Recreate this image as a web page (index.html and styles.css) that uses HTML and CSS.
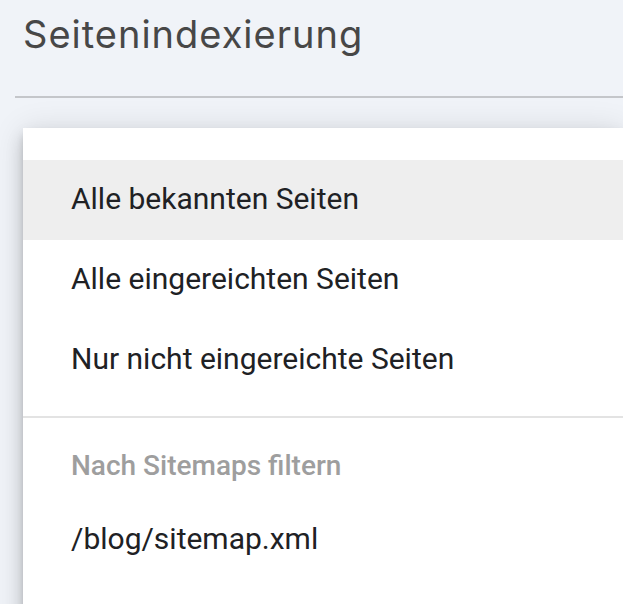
FILE: index.html
```html
<!DOCTYPE html>
<html lang="de">
<head>
<meta charset="utf-8">
<title>Seitenindexierung</title>
<link rel="stylesheet" href="styles.css">
</head>
<body>
<header class="page-head">
  <h1 class="title">Seitenindexierung</h1>
</header>
<div class="rule"></div>
<div class="menu" role="listbox">
  <div class="item selected" role="option">Alle bekannten Seiten</div>
  <div class="item" role="option">Alle eingereichten Seiten</div>
  <div class="item" role="option">Nur nicht eingereichte Seiten</div>
  <div class="menu-sep"></div>
  <div class="group-label">Nach Sitemaps filtern</div>
  <div class="item" role="option">/blog/sitemap.xml</div>
</div>
</body>
</html>
```
FILE: styles.css
```css
html, body {
  margin: 0;
  padding: 0;
  height: 100%;
  overflow: hidden;
}
body {
  background: #f0f3f8;
  font-family: Roboto, "Noto Sans", sans-serif;
}
.page-head {
  box-sizing: border-box;
  height: 96px;
  padding: 12px 0 0 23px;
}
.title {
  margin: 0;
  font-family: Inter, Roboto, sans-serif;
  font-size: 38px;
  line-height: 44px;
  font-weight: 400;
  letter-spacing: 1px;
  color: #474747;
}
.rule {
  margin-left: 15px;
  height: 2px;
  background: #c4c6ca;
}
.menu {
  margin: 30px 0 0 23px;
  padding-top: 32px;
  height: 480px;
  background: #fff;
  box-shadow: 0 5px 8px -2px rgba(0,0,0,.2), 0 10px 17px 0 rgba(0,0,0,.14), 0 2px 30px 0 rgba(0,0,0,.12);
}
.item {
  height: 80px;
  line-height: 78px;
  padding-left: 48px;
  font-size: 30px;
  color: #202124;
  white-space: nowrap;
}
.item.selected {
  background: #eeeeee;
}
.menu-sep {
  margin-top: 16px;
  height: 2px;
  background: #e3e3e3;
}
.group-label {
  box-sizing: border-box;
  height: 82px;
  padding: 32px 0 0 48px;
  font-size: 28px;
  line-height: 32px;
  font-weight: 500;
  color: #9e9e9e;
  white-space: nowrap;
}
```
